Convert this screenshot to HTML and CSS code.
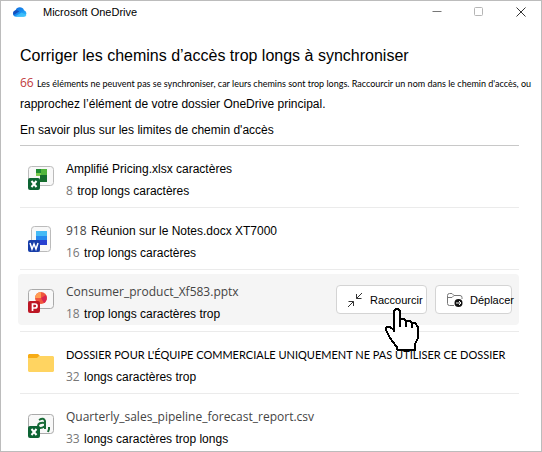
FILE: index.html
```html
<!DOCTYPE html>
<html lang="fr">
<head>
<meta charset="utf-8">
<title>Microsoft OneDrive</title>
<link rel="stylesheet" href="styles.css">
</head>
<body>
<div class="window">
  <header class="titlebar">
    <svg class="cloud" viewBox="0 0 14 10" aria-hidden="true">
      <defs><linearGradient id="sky" x1="0" y1="0" x2="1" y2="1"><stop offset="0" stop-color="#1769d8"/><stop offset=".5" stop-color="#168cf0"/><stop offset="1" stop-color="#35c5ff"/></linearGradient></defs>
      <path fill="url(#sky)" d="M3.400 9.800A3.300 3.300 0 0 1 .1 6.400 3.300 3.300 0 0 1 2.600 3.200 4.500 4.500 0 0 1 11 3.200a3.400 3.400 0 0 1-.4 6.600z"/>
      <path fill="#1450bd" d="M2.600 3.200a3.200 3.200 0 0 0-2 4.800L6.300 4.600A4.500 4.500 0 0 0 2.600 3.200z"/>
      <path fill="#48c8fb" d="M3.600 9.800h7a3 3 0 0 0 2.900-1.900L8.600 5.500 2 9.400z" opacity=".7"/>
    </svg>
    <span class="app-name">Microsoft OneDrive</span>
    <div class="controls">
      <button class="control" aria-label="Réduire"><svg viewBox="0 0 10 10"><path d="M.5 4.500h9" stroke="#777"/></svg></button>
      <button class="control" aria-label="Agrandir"><svg viewBox="0 0 10 10"><rect x=".5" y=".5" width="8" height="8" rx="1" stroke="#b5b5b5"/></svg></button>
      <button class="control" aria-label="Fermer"><svg viewBox="0 0 10 10"><path d="M.5 .5l9 9M9.500 .5l-9 9" stroke="#333"/></svg></button>
    </div>
  </header>
  <main class="content">
    <h1>Corriger les chemins d’accès trop longs à synchroniser</h1>
    <p class="notice"><span class="total">66</span> Les éléments ne peuvent pas se synchroniser, car leurs chemins sont trop longs. Raccourcir un nom dans le chemin d'accès, ou</p>
    <p class="advice">rapprochez l’élément de votre dossier OneDrive principal.</p>
    <a class="more" href="#">En savoir plus sur les limites de chemin d'accès</a>
    <ul class="files">
      <li class="file"><div class="row">
        <svg class="icon" viewBox="0 0 26 26" aria-hidden="true"><rect x=".5" y="2.500" width="25" height="19" rx="3" fill="#f8f8f8" stroke="#bbb"/><path fill="#79c94d" d="M8 5h11v7H8z"/><path fill="#1d8a32" d="M8 5h5v4H8z"/><path fill="#50b43c" d="M13 5h6v6h-6z"/><path fill="#146c2c" d="M12 11h7v7h-7z"/><rect y="14" width="12" height="12" rx="2" fill="#0d6434"/><path d="M3.500 17l5 6M8.500 17l-5 6" stroke="#fff" stroke-width="2"/></svg>
        <div class="label"><div class="name">Amplifié Pricing.xlsx caractères</div><div class="detail"><span class="count">8</span> trop longs caractères</div></div>
      </div></li>
      <li class="file"><div class="row">
        <svg class="icon" viewBox="0 0 26 26" aria-hidden="true"><rect x="3.500" y=".5" width="19" height="25" rx="3" fill="#f8f8f8" stroke="#bbb"/><path fill="#44baf5" d="M8 5h11v5H8z"/><path fill="#2588ee" d="M8 10h11v4H8z"/><path fill="#263fd0" d="M8 14h11v5H8z"/><rect y="14" width="12" height="12" rx="2" fill="#163da9"/><path d="M2 17l2 6 2-5 2 5 2-6" fill="none" stroke="#fff" stroke-width="1.500"/></svg>
        <div class="label"><div class="name"><span class="prefix">918</span> Réunion sur le Notes.docx XT7000</div><div class="detail"><span class="count">16</span> trop longs caractères</div></div>
      </div></li>
      <li class="file"><div class="row selected">
        <svg class="icon" viewBox="0 0 26 26" aria-hidden="true"><rect x=".5" y="2.500" width="25" height="19" rx="3" fill="#f8f8f8" stroke="#aaa"/><circle cx="13" cy="11" r="6" fill="#f0563d"/><path fill="#ff9d54" d="M13 5a6 6 0 0 0-6 6l6 0z"/><path fill="#d92750" d="M13 11l5-3a6 6 0 0 1-2 8z"/><rect y="14" width="12" height="12" rx="2" fill="#bd1725"/><path d="M4.500 24v-7H7a1.800 1.800 0 0 1 0 4H4.500" fill="none" stroke="#fff" stroke-width="1.700"/></svg>
        <div class="label"><div class="name system">Consumer_product_Xf583.pptx</div><div class="detail"><span class="count">18</span> trop longs caractères trop</div></div>
        <div class="actions">
          <button class="action shorten"><svg viewBox="0 0 16 16" aria-hidden="true"><path d="M1.500 9.500h5V14M6.500 9.500L1 15M9.500 2v4.500h5M9.500 6.500L15 1"/></svg>Raccourcir</button>
          <button class="action move"><svg viewBox="0 0 16 16" aria-hidden="true"><path d="M7 13.500H2.500a2 2 0 0 1-2-2v-8a2 2 0 0 1 2-2H5l2 2h6a2 2 0 0 1 2 2V7M.5 5.500H5l2-2" stroke="#777"/><circle cx="11.500" cy="11" r="4" fill="#111" stroke="none"/><path stroke="#fff" d="M9 11h5M12 9l2 2-2 2"/></svg>Déplacer</button>
          <svg class="pointer" viewBox="0 0 34 44" aria-hidden="true"><path fill="#fff" d="M9 25V4l2-2h2l2 2v8h4l2 2h4l2 2h3l3 4v11l-3 6v6H12l-5-9-3-5-3-6v-3h4z"/><path fill="none" stroke="#000" stroke-width="2" stroke-linejoin="bevel" shape-rendering="crispEdges" d="M9 25V4l2-2h2l2 2v8h4l2 2h4l2 2h3l3 4v11l-3 6v6H12v-3l-5-6-3-5-3-6v-3h4l4 3M15 12v8M21 14v6M27 16v5"/></svg>
        </div>
      </div></li>
      <li class="file"><div class="row">
        <svg class="icon" viewBox="0 0 26 26" aria-hidden="true"><path fill="#f7ac16" d="M1 4h9l2 2v4H0V5z"/><path fill="#ffd461" d="M11 6h14l1 1v14l-1 1H1l-1-1V8h9z"/></svg>
        <div class="label"><div class="name caps">DOSSIER POUR L'ÉQUIPE COMMERCIALE UNIQUEMENT NE PAS UTILISER CE DOSSIER</div><div class="detail"><span class="count">32</span> longs caractères trop</div></div>
      </div></li>
      <li class="file"><div class="row">
        <svg class="icon" viewBox="0 0 26 26" aria-hidden="true"><rect x=".5" y="2.500" width="25" height="19" rx="3" fill="#f8f8f8" stroke="#aaa"/><path d="M11 8q5-3 6 1v8M17 11q-7-1-7 3 1 4 7 0M21 15v2l-1 3" fill="none" stroke="#176a36" stroke-width="2"/><rect y="14" width="12" height="12" rx="2" fill="#0d6434"/><path d="M3.500 17l5 6M8.500 17l-5 6" stroke="#fff" stroke-width="2"/></svg>
        <div class="label"><div class="name system">Quarterly_sales_pipeline_forecast_report.csv</div><div class="detail"><span class="count">33</span> longs caractères trop longs</div></div>
      </div></li>
    </ul>
  </main>
</div>
</body>
</html>
```
FILE: styles.css
```css
* { box-sizing: border-box; }
body { margin: 0; background: #fff; color: #000; font: 12px/20px "Liberation Sans", sans-serif; }
h1, p, ul { margin: 0; padding: 0; font-weight: 400; white-space: nowrap; }
button { margin: 0; padding: 0; font: inherit; color: inherit; }
.window { height: 100vh; border: 1px solid #bcbcbc; overflow: hidden; }
.titlebar { display: flex; align-items: center; height: 22px; padding: 0 12px; }
.cloud { width: 14px; height: 10px; }
.app-name { margin-left: 16px; font-size: 11px; }
.controls { display: flex; gap: 32px; margin-left: auto; padding-right: 3px; }
.control { width: 10px; height: 20px; border: 0; background: none; }
.control svg { display: block; width: 10px; height: 10px; fill: none; }
.content { padding: 21px 22px 0 19px; }
h1 { font-size: 16px; line-height: 24px; }
.notice { margin-top: 5px; font: 9px/20px Lato, "Liberation Sans", sans-serif; }
.total { margin-right: 1px; color: #c0393b; font: 12px/20px "Open Sans", sans-serif; }
.more { display: block; width: max-content; margin-top: 6px; color: inherit; text-decoration: none; }
.files { margin-top: 5px; border-top: 1px solid #c8c8c8; list-style: none; }
.file { display: flow-root; border-bottom: 1px solid #ebebeb; }
.file:last-child { border-bottom: 0; }
.row { display: flex; height: 61px; align-items: center; }
.icon { flex: none; width: 26px; height: 26px; margin-left: 8px; }
.label { margin-left: 12px; padding-top: 7px; }
.selected { height: 51px; margin: 4px 0 6px -2px; padding-left: 2px; border-radius: 4px; background: #f5f5f5; }
.name, .detail { line-height: 22px; }
.name.system { color: #444; font-family: "Open Sans", sans-serif; }
.prefix, .count { margin-right: 1px; color: #777; font-family: "Open Sans", sans-serif; }
.prefix { color: #444; }
.name.caps { font-family: Lato, "Liberation Sans", sans-serif; font-size: 11px; }
.actions { position: relative; display: flex; gap: 8px; margin-left: auto; margin-right: 7px; }
.action { display: flex; align-items: center; gap: 7px; height: 29px; border: 1px solid #d4d4d4; border-radius: 4px; background: #fff; font-size: 11px; white-space: nowrap; }
.action svg { flex: none; width: 16px; height: 16px; fill: none; stroke: #333; }
.shorten { width: 91px; padding-left: 10px; }
.move { width: 77px; padding-left: 11px; }
.pointer { position: absolute; top: 22px; left: 49px; z-index: 1; width: 34px; height: 44px; }
```
